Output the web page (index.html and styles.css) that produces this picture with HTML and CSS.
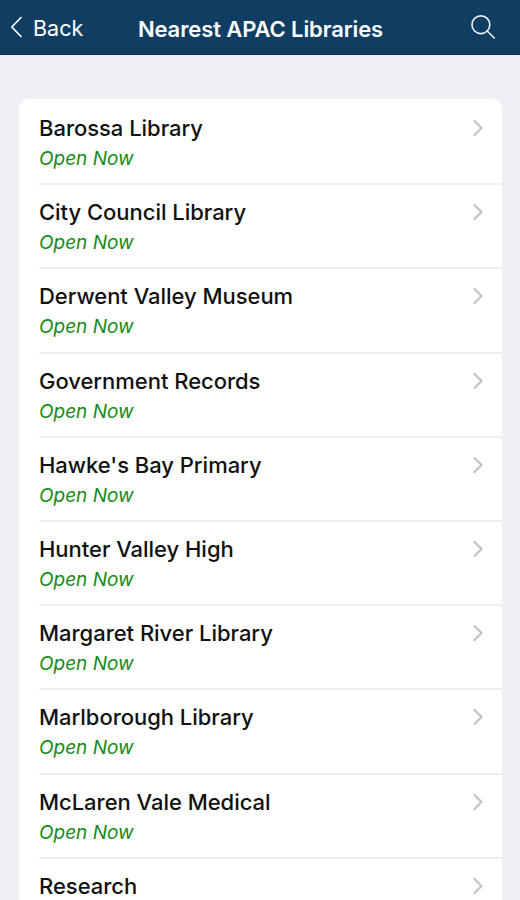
FILE: index.html
```html
<!DOCTYPE html>
<html lang="en">
<head>
<meta charset="utf-8">
<title>Nearest APAC Libraries</title>
<link rel="stylesheet" href="styles.css">
</head>
<body>
<header class="bar">
  <a class="back"><svg class="back-icon" viewBox="0 0 12 22"><path d="M11 1.5 1.8 11l9.2 9.5"/></svg><span class="back-label">Back</span></a>
  <h1 class="title">Nearest APAC Libraries</h1>
  <svg class="search" viewBox="0 0 26 26"><circle cx="10.9" cy="10.7" r="8.9"/><path d="m17.2 17 7 7"/></svg>
</header>
<main class="list">
  <div class="row"><div class="info"><div class="name">Barossa Library</div><div class="status">Open Now</div></div><svg class="chevron" viewBox="0 0 10 16"><path d="m1.5 1 7 7-7 7"/></svg></div>
  <div class="row"><div class="info"><div class="name">City Council Library</div><div class="status">Open Now</div></div><svg class="chevron" viewBox="0 0 10 16"><path d="m1.5 1 7 7-7 7"/></svg></div>
  <div class="row"><div class="info"><div class="name">Derwent Valley Museum</div><div class="status">Open Now</div></div><svg class="chevron" viewBox="0 0 10 16"><path d="m1.5 1 7 7-7 7"/></svg></div>
  <div class="row"><div class="info"><div class="name">Government Records</div><div class="status">Open Now</div></div><svg class="chevron" viewBox="0 0 10 16"><path d="m1.5 1 7 7-7 7"/></svg></div>
  <div class="row"><div class="info"><div class="name">Hawke's Bay Primary</div><div class="status">Open Now</div></div><svg class="chevron" viewBox="0 0 10 16"><path d="m1.5 1 7 7-7 7"/></svg></div>
  <div class="row"><div class="info"><div class="name">Hunter Valley High</div><div class="status">Open Now</div></div><svg class="chevron" viewBox="0 0 10 16"><path d="m1.5 1 7 7-7 7"/></svg></div>
  <div class="row"><div class="info"><div class="name">Margaret River Library</div><div class="status">Open Now</div></div><svg class="chevron" viewBox="0 0 10 16"><path d="m1.5 1 7 7-7 7"/></svg></div>
  <div class="row"><div class="info"><div class="name">Marlborough Library</div><div class="status">Open Now</div></div><svg class="chevron" viewBox="0 0 10 16"><path d="m1.5 1 7 7-7 7"/></svg></div>
  <div class="row"><div class="info"><div class="name">McLaren Vale Medical</div><div class="status">Open Now</div></div><svg class="chevron" viewBox="0 0 10 16"><path d="m1.5 1 7 7-7 7"/></svg></div>
  <div class="row"><div class="info"><div class="name">Research</div></div><svg class="chevron" viewBox="0 0 10 16"><path d="m1.5 1 7 7-7 7"/></svg></div>
</main>
</body>
</html>
```

FILE: styles.css
```css
* { box-sizing: border-box; }
body {
  margin: 0;
  height: 900px;
  overflow: hidden;
  background: #efeff4;
  font-family: Inter, "Liberation Sans", sans-serif;
}
svg { fill: none; stroke-linecap: round; stroke-linejoin: round; }
.bar {
  display: grid;
  grid-template-columns: 1fr auto 1fr;
  align-items: center;
  height: 55px;
  padding: 0 9px 0 10px;
  border-bottom: 1px solid #10305f;
  background: #103e62;
  color: #fff;
}
.back { display: flex; align-items: center; gap: 11px; font-size: 21.5px; }
.back-label { padding-top: 2px; }
.back-icon { width: 12px; height: 22px; stroke: #fff; stroke-width: 1.7; }
.title { margin: 4px 0 0; font-size: 22px; font-weight: 600; letter-spacing: -0.1px; white-space: nowrap; }
.search { width: 26px; height: 26px; margin-right: 15px; justify-self: end; stroke: #e8edf4; stroke-width: 1.7; }
.list {
  margin: 44px 18px 0 19px;
  padding-left: 20px;
  border-radius: 9px 9px 0 0;
  background: #fff;
}
.row {
  display: flex;
  justify-content: space-between;
  height: 84.2px;
  padding: 14px 19px 0 0;
}
.row + .row { padding-top: 12px; border-top: 2px solid #efeff2; }
.name { font-size: 22px; line-height: 30px; font-weight: 500; letter-spacing: -0.03px; color: #111; white-space: nowrap; }
.status { margin-top: 1px; font-size: 19px; line-height: 30px; font-style: italic; color: #168a16; }
.chevron { width: 10px; height: 16px; margin-top: 7px; stroke: #c2c2c4; stroke-width: 2.2; }
```
